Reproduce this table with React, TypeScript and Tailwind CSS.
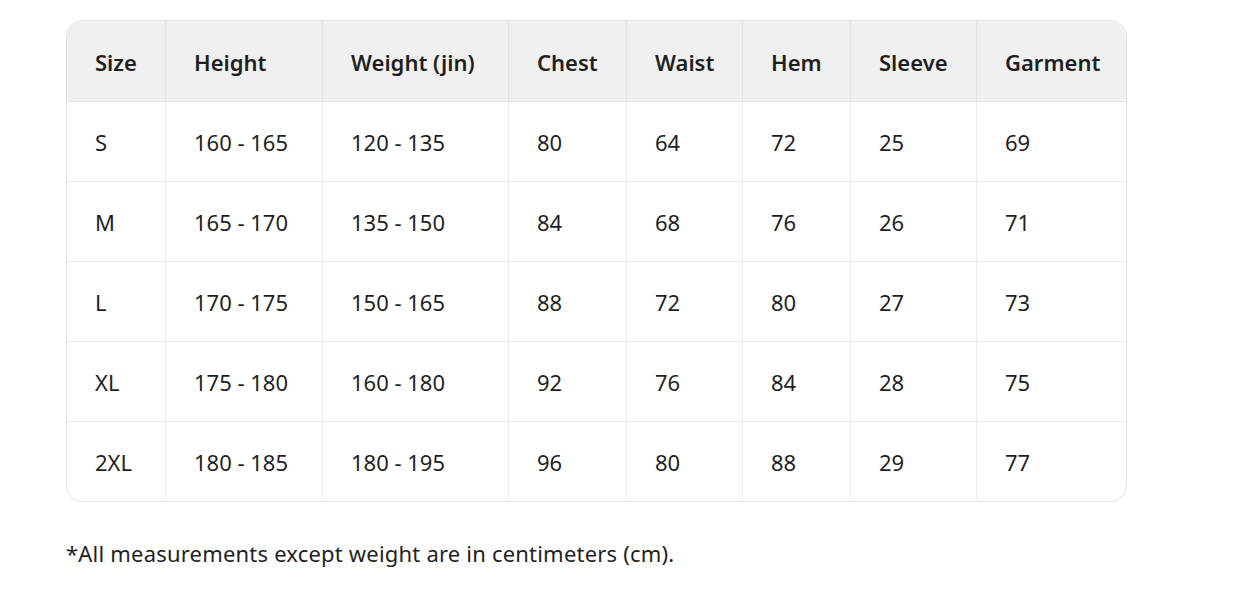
const HEADERS = ['Size', 'Height', 'Weight (jin)', 'Chest', 'Waist', 'Hem', 'Sleeve', 'Garment']

const ROWS = [
  ['S', '160 - 165', '120 - 135', '80', '64', '72', '25', '69'],
  ['M', '165 - 170', '135 - 150', '84', '68', '76', '26', '71'],
  ['L', '170 - 175', '150 - 165', '88', '72', '80', '27', '73'],
  ['XL', '175 - 180', '160 - 180', '92', '76', '84', '28', '75'],
  ['2XL', '180 - 185', '180 - 195', '96', '80', '88', '29', '77'],
]

const gridCls = 'grid grid-cols-[98px_157px_186px_118px_116px_108px_126px_150px]'

export default function App() {
  return (
    <div className="min-h-[600px] bg-white text-[#1f1f1f] font-['Noto_Sans',sans-serif] pl-[66px] pt-[20px]">
      <div className="w-[1061px] border border-[#e3e3e3] rounded-[16px] overflow-hidden">
        <div className={`${gridCls} bg-[#f0f0f0] h-[80px]`}>
          {HEADERS.map((h, i) => (
            <div key={h} className={`flex items-center pl-[28px] pt-[2px] text-[22px] font-semibold ${i > 0 ? 'border-l border-[#e3e3e3]' : ''}`}>{h}</div>
          ))}
        </div>
        {ROWS.map((r) => (
          <div key={r[0]} className={`${gridCls} h-[80px] border-t border-[#e8e8e8]`}>
            {r.map((c, i) => (
              <div key={i} className={`flex items-center pl-[28px] pt-[1px] text-[22px] ${i > 0 ? 'border-l border-[#ececec]' : ''}`}>{c}</div>
            ))}
          </div>
        ))}
      </div>
      <p className="mt-[35px] text-[22px] tracking-[0.2px]">*All measurements except weight are in centimeters (cm).</p>
    </div>
  )
}
